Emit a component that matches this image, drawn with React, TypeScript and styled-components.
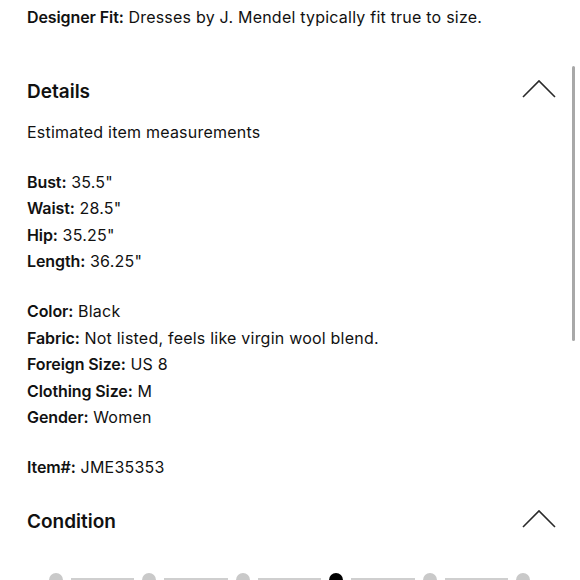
import React, { FC } from "react";
import styled, { createGlobalStyle } from "styled-components";

const GlobalStyle = createGlobalStyle`
  html, body {
    margin: 0;
    padding: 0;
    background: #ffffff;
  }
  body {
    font-family: Inter, "Liberation Sans", Arial, sans-serif;
    color: #111111;
    -webkit-font-smoothing: antialiased;
  }
`;

type Field = { label: string; value: string };

const measurements: Field[] = [
  { label: "Bust", value: '35.5"' },
  { label: "Waist", value: '28.5"' },
  { label: "Hip", value: '35.25"' },
  { label: "Length", value: '36.25"' },
];

const attributes: Field[] = [
  { label: "Color", value: "Black" },
  { label: "Fabric", value: "Not listed, feels like virgin wool blend." },
  { label: "Foreign Size", value: "US 8" },
  { label: "Clothing Size", value: "M" },
  { label: "Gender", value: "Women" },
];

const conditionSteps = 6;
const activeStep = 3;

const ChevronUp: FC = () => (
  <ChevronSvg width="34" height="19" viewBox="0 0 34 19">
    <polyline
      points="1,18 17,2 33,18"
      fill="none"
      stroke="#2a2a2a"
      strokeWidth="1.6"
    />
  </ChevronSvg>
);

const FieldLine: FC<Field> = ({ label, value }) => (
  <Line>
    <Label>{label}:</Label> {value}
  </Line>
);

export default function App() {
  return (
    <>
      <GlobalStyle />
      <Page>
        <Line>
          <Label>Designer Fit:</Label> Dresses by J. Mendel typically fit true
          to size.
        </Line>

        <SectionHeader $top={48}>
          <Heading>Details</Heading>
          <ChevronUp />
        </SectionHeader>

        <Paragraph $top={14}>
          <Line>Estimated item measurements</Line>
        </Paragraph>

        <Paragraph>
          {measurements.map((f) => (
            <FieldLine key={f.label} {...f} />
          ))}
        </Paragraph>

        <Paragraph>
          {attributes.map((f) => (
            <FieldLine key={f.label} {...f} />
          ))}
        </Paragraph>

        <Paragraph>
          <FieldLine label="Item#" value="JME35353" />
        </Paragraph>

        <SectionHeader $top={28}>
          <Heading>Condition</Heading>
          <ChevronUp />
        </SectionHeader>

        <Scale>
          {Array.from({ length: conditionSteps }).map((_, i) => (
            <React.Fragment key={i}>
              <Dot $active={i === activeStep} />
              {i < conditionSteps - 1 && <Track />}
            </React.Fragment>
          ))}
        </Scale>
      </Page>
      <ScrollThumb />
    </>
  );
}

const Page = styled.main`
  display: flex;
  flex-direction: column;
  padding: 4px 25px 0 27px;
  height: 580px;
  box-sizing: border-box;
  overflow: hidden;
`;

const Line = styled.div`
  font-size: 16px;
  line-height: 26.5px;
  letter-spacing: 0.22px;
  color: #111111;
  white-space: nowrap;
`;

const Label = styled.span`
  font-weight: 600;
  letter-spacing: -0.1px;
`;

const Paragraph = styled.section<{ $top?: number }>`
  display: flex;
  flex-direction: column;
  margin-top: ${(p) => (p.$top ?? 23.5)}px;
`;

const SectionHeader = styled.div<{ $top: number }>`
  display: flex;
  align-items: center;
  justify-content: space-between;
  margin-top: ${(p) => p.$top}px;
  height: 26px;
`;

const Heading = styled.h2`
  margin: 0;
  font-size: 19px;
  font-weight: 600;
  color: #111111;
  line-height: 26px;
`;

const ChevronSvg = styled.svg`
  display: block;
  margin-top: -6px;
  margin-right: -1px;
`;

const Scale = styled.div`
  display: flex;
  align-items: center;
  flex: none;
  margin-top: 38px;
  padding-left: 22px;
  padding-right: 25px;
  gap: 8px;
`;

const Dot = styled.span<{ $active: boolean }>`
  flex: none;
  width: 14px;
  height: 14px;
  border-radius: 50%;
  background: ${(p) => (p.$active ? "#000000" : "#c9c9c9")};
`;

const Track = styled.span`
  flex: 1;
  height: 3px;
  background: #cfcfcf;
`;

const ScrollThumb = styled.div`
  position: fixed;
  top: 66px;
  right: 5px;
  width: 3px;
  height: 275px;
  border-radius: 2px;
  background: #a8a8a8;
`;
